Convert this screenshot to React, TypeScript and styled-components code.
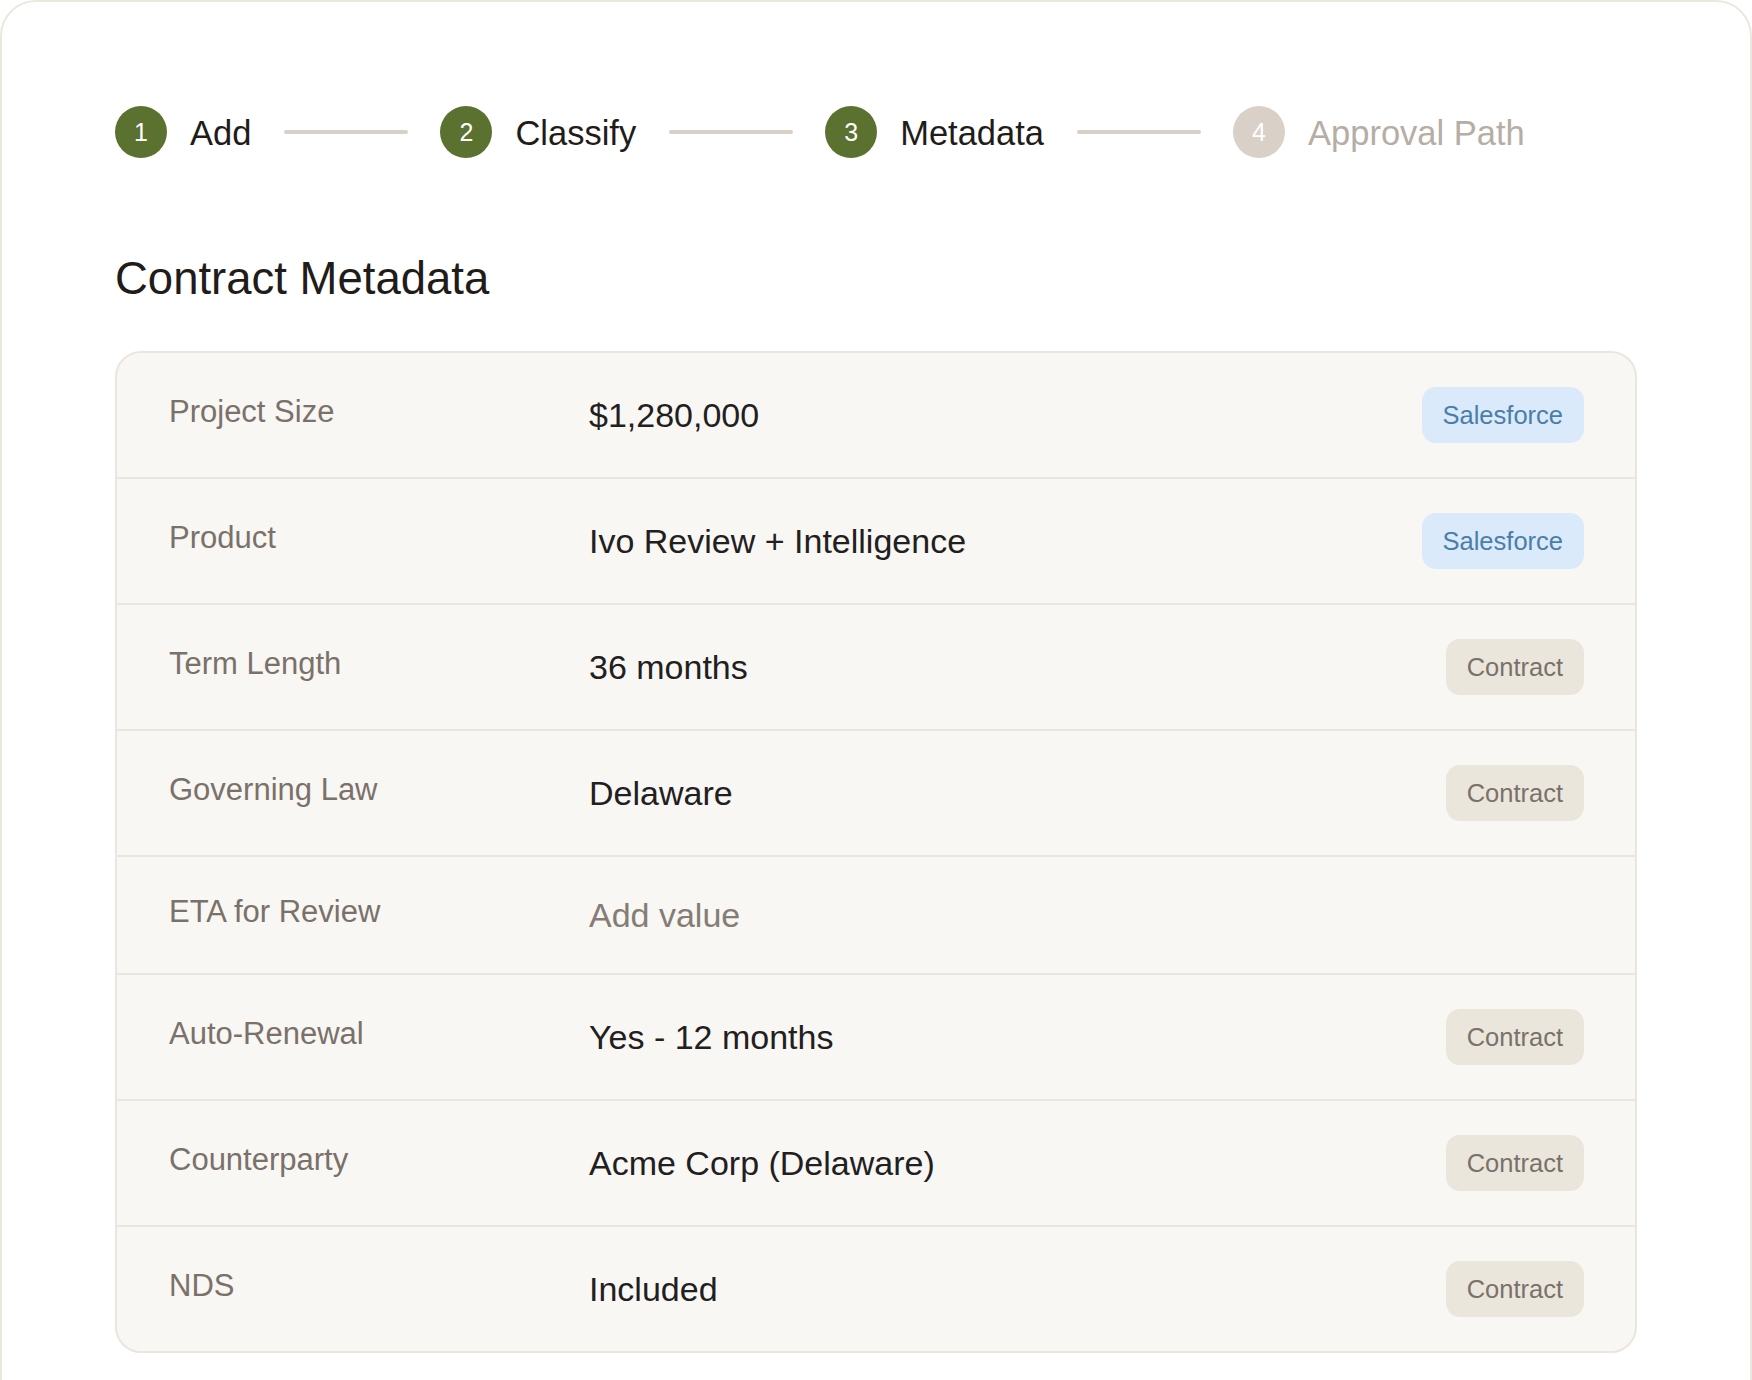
import React from "react";
import styled, { createGlobalStyle } from "styled-components";

type StepState = "done" | "todo";
type Source = "salesforce" | "contract";

interface Step {
    number: number;
    label: string;
    state: StepState;
}

interface MetadataRow {
    label: string;
    value?: string;
    source?: Source;
}

const steps: Step[] = [
    { number: 1, label: "Add", state: "done" },
    { number: 2, label: "Classify", state: "done" },
    { number: 3, label: "Metadata", state: "done" },
    { number: 4, label: "Approval Path", state: "todo" },
];

const rows: MetadataRow[] = [
    { label: "Project Size", value: "$1,280,000", source: "salesforce" },
    { label: "Product", value: "Ivo Review + Intelligence", source: "salesforce" },
    { label: "Term Length", value: "36 months", source: "contract" },
    { label: "Governing Law", value: "Delaware", source: "contract" },
    { label: "ETA for Review" },
    { label: "Auto-Renewal", value: "Yes - 12 months", source: "contract" },
    { label: "Counterparty", value: "Acme Corp (Delaware)", source: "contract" },
    { label: "NDS", value: "Included", source: "contract" },
];

const GlobalStyle = createGlobalStyle`
    * {
        box-sizing: border-box;
    }
    body {
        margin: 0;
        background: #ffffff;
        font-family: "Liberation Sans", Arial, sans-serif;
        color: #1f1c1a;
    }
`;

const Card = styled.div`
    background: #ffffff;
    border: 2px solid #ece8df;
    border-radius: 36px;
    padding: 104px 113px 120px;
`;

const Stepper = styled.div`
    display: flex;
    align-items: center;
`;

const StepItem = styled.div`
    display: flex;
    align-items: center;
    gap: 23px;
`;

const StepCircle = styled.div<{ $state: StepState }>`
    width: 52px;
    height: 52px;
    border-radius: 50%;
    display: flex;
    align-items: center;
    justify-content: center;
    background: ${(p) => (p.$state === "done" ? "#5a712f" : "#d9d0c7")};
    color: #ffffff;
    font-size: 25px;
    line-height: 1;
`;

const StepLabel = styled.span<{ $state: StepState }>`
    font-size: 34.5px;
    padding-top: 2px;
    color: ${(p) => (p.$state === "done" ? "#1f1c1a" : "#b6ada5")};
`;

const Connector = styled.div`
    width: 124px;
    height: 4px;
    margin: 0 32px 0 33px;
    border-radius: 2px;
    background: #d9d0c7;
`;

const Heading = styled.h2`
    margin: 94px 0 45px;
    font-size: 45.5px;
    font-weight: 500;
    line-height: 54px;
    color: #1f1c1a;
`;

const Table = styled.div`
    background: #f8f7f3;
    border: 2px solid #ebe6dd;
    border-radius: 26px;
    overflow: hidden;
`;

const Row = styled.div`
    display: grid;
    grid-template-columns: 420px 1fr auto;
    align-items: center;
    padding: 34px 51px 34px 52px;

    & + & {
        border-top: 2px solid #ebe6dd;
    }
`;

const Label = styled.span`
    font-size: 31px;
    color: #7a716a;
    padding-bottom: 7px;
`;

const Value = styled.span<{ $empty?: boolean }>`
    font-size: 34px;
    line-height: 48px;
    color: ${(p) => (p.$empty ? "#857c75" : "#22201e")};
`;

const Badge = styled.span<{ $source: Source }>`
    height: 56px;
    padding: 0 21px;
    border-radius: 14px;
    display: inline-flex;
    align-items: center;
    font-size: 25.5px;
    background: ${(p) => (p.$source === "salesforce" ? "#daeafa" : "#ebe6dc")};
    color: ${(p) => (p.$source === "salesforce" ? "#4a7ea9" : "#7a716a")};
`;

const badgeText: Record<Source, string> = {
    salesforce: "Salesforce",
    contract: "Contract",
};

function App(): JSX.Element {
    return (
        <>
            <GlobalStyle />
            <Card>
                <Stepper>
                    {steps.map((step, i) => (
                        <React.Fragment key={step.number}>
                            {i > 0 && <Connector />}
                            <StepItem>
                                <StepCircle $state={step.state}>{step.number}</StepCircle>
                                <StepLabel $state={step.state}>{step.label}</StepLabel>
                            </StepItem>
                        </React.Fragment>
                    ))}
                </Stepper>

                <Heading>Contract Metadata</Heading>

                <Table>
                    {rows.map((row) => (
                        <Row key={row.label}>
                            <Label>{row.label}</Label>
                            <Value $empty={!row.value}>{row.value ?? "Add value"}</Value>
                            {row.source ? <Badge $source={row.source}>{badgeText[row.source]}</Badge> : <span />}
                        </Row>
                    ))}
                </Table>
            </Card>
        </>
    );
}

export default App;
